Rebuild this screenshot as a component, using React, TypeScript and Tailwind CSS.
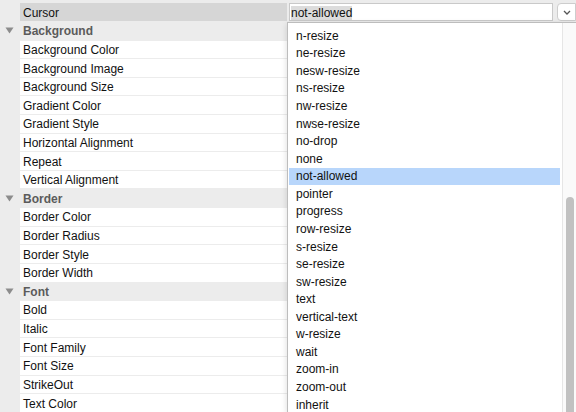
import React from 'react';

type Row = { kind: 'group' | 'prop'; label: string };

const rows: Row[] = [
    { kind: 'group', label: 'Background' },
    { kind: 'prop', label: 'Background Color' },
    { kind: 'prop', label: 'Background Image' },
    { kind: 'prop', label: 'Background Size' },
    { kind: 'prop', label: 'Gradient Color' },
    { kind: 'prop', label: 'Gradient Style' },
    { kind: 'prop', label: 'Horizontal Alignment' },
    { kind: 'prop', label: 'Repeat' },
    { kind: 'prop', label: 'Vertical Alignment' },
    { kind: 'group', label: 'Border' },
    { kind: 'prop', label: 'Border Color' },
    { kind: 'prop', label: 'Border Radius' },
    { kind: 'prop', label: 'Border Style' },
    { kind: 'prop', label: 'Border Width' },
    { kind: 'group', label: 'Font' },
    { kind: 'prop', label: 'Bold' },
    { kind: 'prop', label: 'Italic' },
    { kind: 'prop', label: 'Font Family' },
    { kind: 'prop', label: 'Font Size' },
    { kind: 'prop', label: 'StrikeOut' },
    { kind: 'prop', label: 'Text Color' },
];

const options = [
    'n-resize', 'ne-resize', 'nesw-resize', 'ns-resize', 'nw-resize', 'nwse-resize',
    'no-drop', 'none', 'not-allowed', 'pointer', 'progress', 'row-resize', 's-resize',
    'se-resize', 'sw-resize', 'text', 'vertical-text', 'w-resize', 'wait', 'zoom-in',
    'zoom-out', 'inherit',
];

const Triangle = () => (
    <svg width="9" height="7" viewBox="0 0 9 7" className="shrink-0">
        <path d="M0.5 0.5 L8.5 0.5 L4.5 6.5 Z" fill="#8c8c8c" />
    </svg>
);

export default function App() {
    const selected = 'not-allowed';

    return (
        <div className="relative w-[576px] h-[412px] overflow-hidden bg-[#ececec] font-['Liberation_Sans',Arial,sans-serif] text-[12px] text-[#111]">
            <div className="flex flex-col gap-px pt-[3px] bg-[#ececec]">
                {/* selected Cursor row */}
                <div className="flex h-[18px] gap-px">
                    <div className="ml-[20px] w-[267px] bg-[#d6d6d6] flex items-center pl-[3px] pt-px">Cursor</div>
                    <div className="flex-1 flex items-stretch gap-[4px] pl-[1px]">
                        <div className="flex-1 bg-white border border-[#c9c9c9] flex items-center pl-[1px] pt-px">
                            <span className="bg-[#dcdcdc] leading-[14px]">not-allowed</span>
                        </div>
                        <div className="w-[19px] bg-white border border-[#cdcdcd] rounded-l-[4px] flex items-center justify-center">
                            <svg width="8" height="5" viewBox="0 0 8 5">
                                <path d="M1 1 L4 4 L7 1" stroke="#555" strokeWidth="1.3" fill="none" />
                            </svg>
                        </div>
                    </div>
                </div>
                {rows.map((r) =>
                    r.kind === 'group' ? (
                        <div key={r.label} className="flex items-center h-[17.62px] bg-[#ececec] pl-[5px] gap-[9px]">
                            <Triangle />
                            <span className="font-bold text-[#5b5b5b] pt-px">{r.label}</span>
                        </div>
                    ) : (
                        <div key={r.label} className="flex h-[17.62px] gap-px">
                            <div className="ml-[20px] w-[267px] bg-white flex items-center pl-[3px] pt-px">{r.label}</div>
                            <div className="flex-1 bg-white" />
                        </div>
                    )
                )}
            </div>

            {/* open dropdown list */}
            <div className="absolute left-[287px] top-[22px] right-0 bottom-0 bg-white border-l border-t border-[#bdbdbd] shadow-[0_2px_6px_rgba(0,0,0,0.15)]">
                <ul className="pt-[4px] pr-[16px] pl-[1px]">
                    {options.map((o) => (
                        <li
                            key={o}
                            className={`h-[17.57px] flex items-center pl-[7px] ${o === selected ? 'bg-[#b8d6fb]' : ''}`}
                        >
                            {o}
                        </li>
                    ))}
                </ul>
                <div className="absolute right-0 top-0 bottom-0 w-[14px] bg-[#fafafa] border-l border-[#e6e6e6]">
                    <div className="absolute left-[3px] top-[174px] bottom-[-10px] w-[8px] rounded-full bg-[#c1c1c1]" />
                </div>
            </div>
        </div>
    );
}
